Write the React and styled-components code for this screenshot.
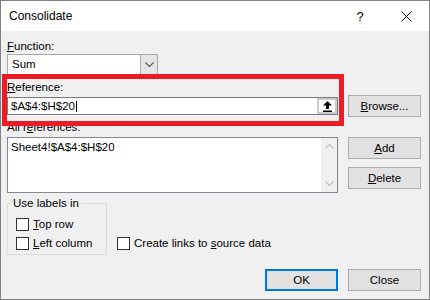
import styled, { createGlobalStyle } from "styled-components";

const GlobalStyle = createGlobalStyle`
  body {
    margin: 0;
    background: #fff;
    font-family: "Liberation Sans", Arial, sans-serif;
  }
`;

const Window = styled.div`
  width: 430px;
  height: 300px;
  box-sizing: border-box;
  border: 1px solid #808080;
  display: flex;
  flex-direction: column;
  background: #f0f0f0;
  font-size: 11.5px;
  color: #000;
`;

const TitleBar = styled.div`
  height: 30px;
  flex: none;
  background: #fff;
  display: flex;
  align-items: center;
  padding-left: 8px;
  font-size: 12px;
  line-height: 15px;
`;

const Title = styled.div`
  flex: 1;
`;

const TitleButton = styled.div`
  width: 46px;
  height: 30px;
  display: flex;
  align-items: center;
  justify-content: center;
  font-size: 13px;
`;

const Body = styled.div`
  position: relative;
  flex: 1;
  display: flex;
  flex-direction: column;
  padding: 0 8px 0 6px;
`;

const Label = styled.div`
  line-height: 15px;
  margin-top: ${(p) => p.$top || 0}px;
`;

const Key = styled.span`
  text-decoration: underline;
  text-underline-offset: 1px;
`;

const Combo = styled.div`
  width: 151px;
  height: 21px;
  box-sizing: border-box;
  border: 1px solid #a9a9a9;
  background: #fff;
  display: flex;
`;

const ComboValue = styled.div`
  flex: 1;
  padding-left: 4px;
  line-height: 19px;
`;

const ComboButton = styled.div`
  width: 16px;
  background: #e5e5e5;
  border-left: 1px solid #a9a9a9;
  display: flex;
  align-items: center;
  justify-content: center;
`;

const Row = styled.div`
  display: flex;
  gap: ${(p) => (p.$gap !== undefined ? p.$gap : 10)}px;
  align-items: ${(p) => p.$align || "flex-start"};
  margin-top: ${(p) => p.$top || 0}px;
`;

const TextBox = styled.div`
  width: 331px;
  height: 18px;
  box-sizing: border-box;
  border: 1px solid #7a7a7a;
  background: #fff;
  display: flex;
`;

const TextValue = styled.div`
  flex: 1;
  padding-left: 3px;
  line-height: 16px;
  display: flex;
  align-items: center;
`;

const Caret = styled.span`
  width: 1px;
  height: 11px;
  background: #000;
  margin-left: 1px;
`;

const CollapseButton = styled.div`
  width: 20px;
  box-sizing: border-box;
  border: 2px solid #cccccc;
  background: #fff;
  display: flex;
  align-items: center;
  justify-content: center;
`;

const Button = styled.button`
  width: 73px;
  height: 22px;
  box-sizing: border-box;
  padding: 0;
  background: #e1e1e1;
  border: ${(p) => (p.$default ? "2px solid #0078d7" : "1px solid #adadad")};
  font-family: inherit;
  font-size: 11.5px;
  color: #000;
`;

const ListBox = styled.div`
  width: 331px;
  height: 56px;
  box-sizing: border-box;
  border: 1px solid #828790;
  background: #fff;
  display: flex;
`;

const ListItems = styled.div`
  flex: 1;
  padding: 2px 3px;
  line-height: 15px;
`;

const ScrollBar = styled.div`
  width: 16px;
  background: #f0f0f0;
  display: flex;
  flex-direction: column;
  justify-content: space-between;
`;

const ScrollArrow = styled.div`
  height: 17px;
  display: flex;
  align-items: center;
  justify-content: center;
`;

const ButtonStack = styled.div`
  display: flex;
  flex-direction: column;
  gap: 8px;
`;

const Group = styled.fieldset`
  width: 100px;
  box-sizing: border-box;
  margin: 0;
  min-width: 0;
  border: 1px solid #dcdcdc;
  padding: 4px 0 1px 3px;
`;

const Legend = styled.legend`
  padding: 0 2px;
  line-height: 15px;
`;

const CheckRow = styled.div`
  height: 19px;
  display: flex;
  align-items: center;
  gap: 4px;
  line-height: 15px;
  padding-left: ${(p) => p.$indent || 0}px;
  margin-left: ${(p) => p.$left || 0}px;
  margin-bottom: ${(p) => p.$bottom || 0}px;
  align-self: ${(p) => p.$self || "auto"};
`;

const Box = styled.span`
  width: 13px;
  height: 13px;
  box-sizing: border-box;
  border: 1px solid #333;
  background: #fff;
  flex: none;
`;

const Footer = styled.div`
  display: flex;
  justify-content: flex-end;
  gap: 10px;
  margin-top: 14px;
`;

const Highlight = styled.div`
  position: absolute;
  top: 43px;
  left: 1px;
  width: 342px;
  height: 52px;
  box-sizing: border-box;
  border: 5px solid #ed1c24;
  pointer-events: none;
`;

function Chevron({ up, color }) {
  return (
    <svg width="9" height="5" viewBox="0 0 9 5">
      <path
        d={up ? "M0.5 4.5 L4.5 0.5 L8.5 4.5" : "M0.5 0.5 L4.5 4.5 L8.5 0.5"}
        fill="none"
        stroke={color}
        strokeWidth="1.2"
      />
    </svg>
  );
}

function CheckBox({ children, ...rest }) {
  return (
    <CheckRow {...rest}>
      <Box />
      <span>{children}</span>
    </CheckRow>
  );
}

export default function App() {
  return (
    <>
      <GlobalStyle />
      <Window>
        <TitleBar>
          <Title>Consolidate</Title>
          <TitleButton>?</TitleButton>
          <TitleButton>
            <svg width="11" height="11" viewBox="0 0 11 11">
              <path d="M0.5 0.5 L10.5 10.5 M10.5 0.5 L0.5 10.5" stroke="#000" strokeWidth="1" />
            </svg>
          </TitleButton>
        </TitleBar>

        <Body>
          <Label $top={8}>
            <Key>F</Key>unction:
          </Label>
          <Combo>
            <ComboValue>Sum</ComboValue>
            <ComboButton>
              <Chevron color="#606060" />
            </ComboButton>
          </Combo>

          <Label $top={5}>
            <Key>R</Key>eference:
          </Label>
          <Row $align="center">
            <TextBox>
              <TextValue>
                $A$4:$H$20
                <Caret />
              </TextValue>
              <CollapseButton>
                <svg width="9" height="11" viewBox="0 0 9 11">
                  <path d="M4.5 0 L9 4.5 L6 4.5 L6 8 L3 8 L3 4.5 L0 4.5 Z" fill="#000" />
                  <rect x="0" y="9.5" width="9" height="1.5" fill="#000" />
                </svg>
              </CollapseButton>
            </TextBox>
            <Button>
              <Key>B</Key>rowse...
            </Button>
          </Row>

          <Label $top={3}>
            All r<Key>e</Key>ferences:
          </Label>
          <Row $top={2}>
            <ListBox>
              <ListItems>Sheet4!$A$4:$H$20</ListItems>
              <ScrollBar>
                <ScrollArrow>
                  <Chevron up color="#c2c2c2" />
                </ScrollArrow>
                <ScrollArrow>
                  <Chevron color="#c2c2c2" />
                </ScrollArrow>
              </ScrollBar>
            </ListBox>
            <ButtonStack>
              <Button>
                <Key>A</Key>dd
              </Button>
              <Button>
                <Key>D</Key>elete
              </Button>
            </ButtonStack>
          </Row>

          <Row $top={3} $gap={0}>
            <Group>
              <Legend>Use labels in</Legend>
              <CheckBox $indent={5}>
                <Key>T</Key>op row
              </CheckBox>
              <CheckBox $indent={5}>
                <Key>L</Key>eft column
              </CheckBox>
            </Group>
            <CheckBox $left={10} $bottom={2} $self="flex-end">
              Create links to <Key>s</Key>ource data
            </CheckBox>
          </Row>

          <Footer>
            <Button $default>OK</Button>
            <Button>Close</Button>
          </Footer>

          <Highlight />
        </Body>
      </Window>
    </>
  );
}
